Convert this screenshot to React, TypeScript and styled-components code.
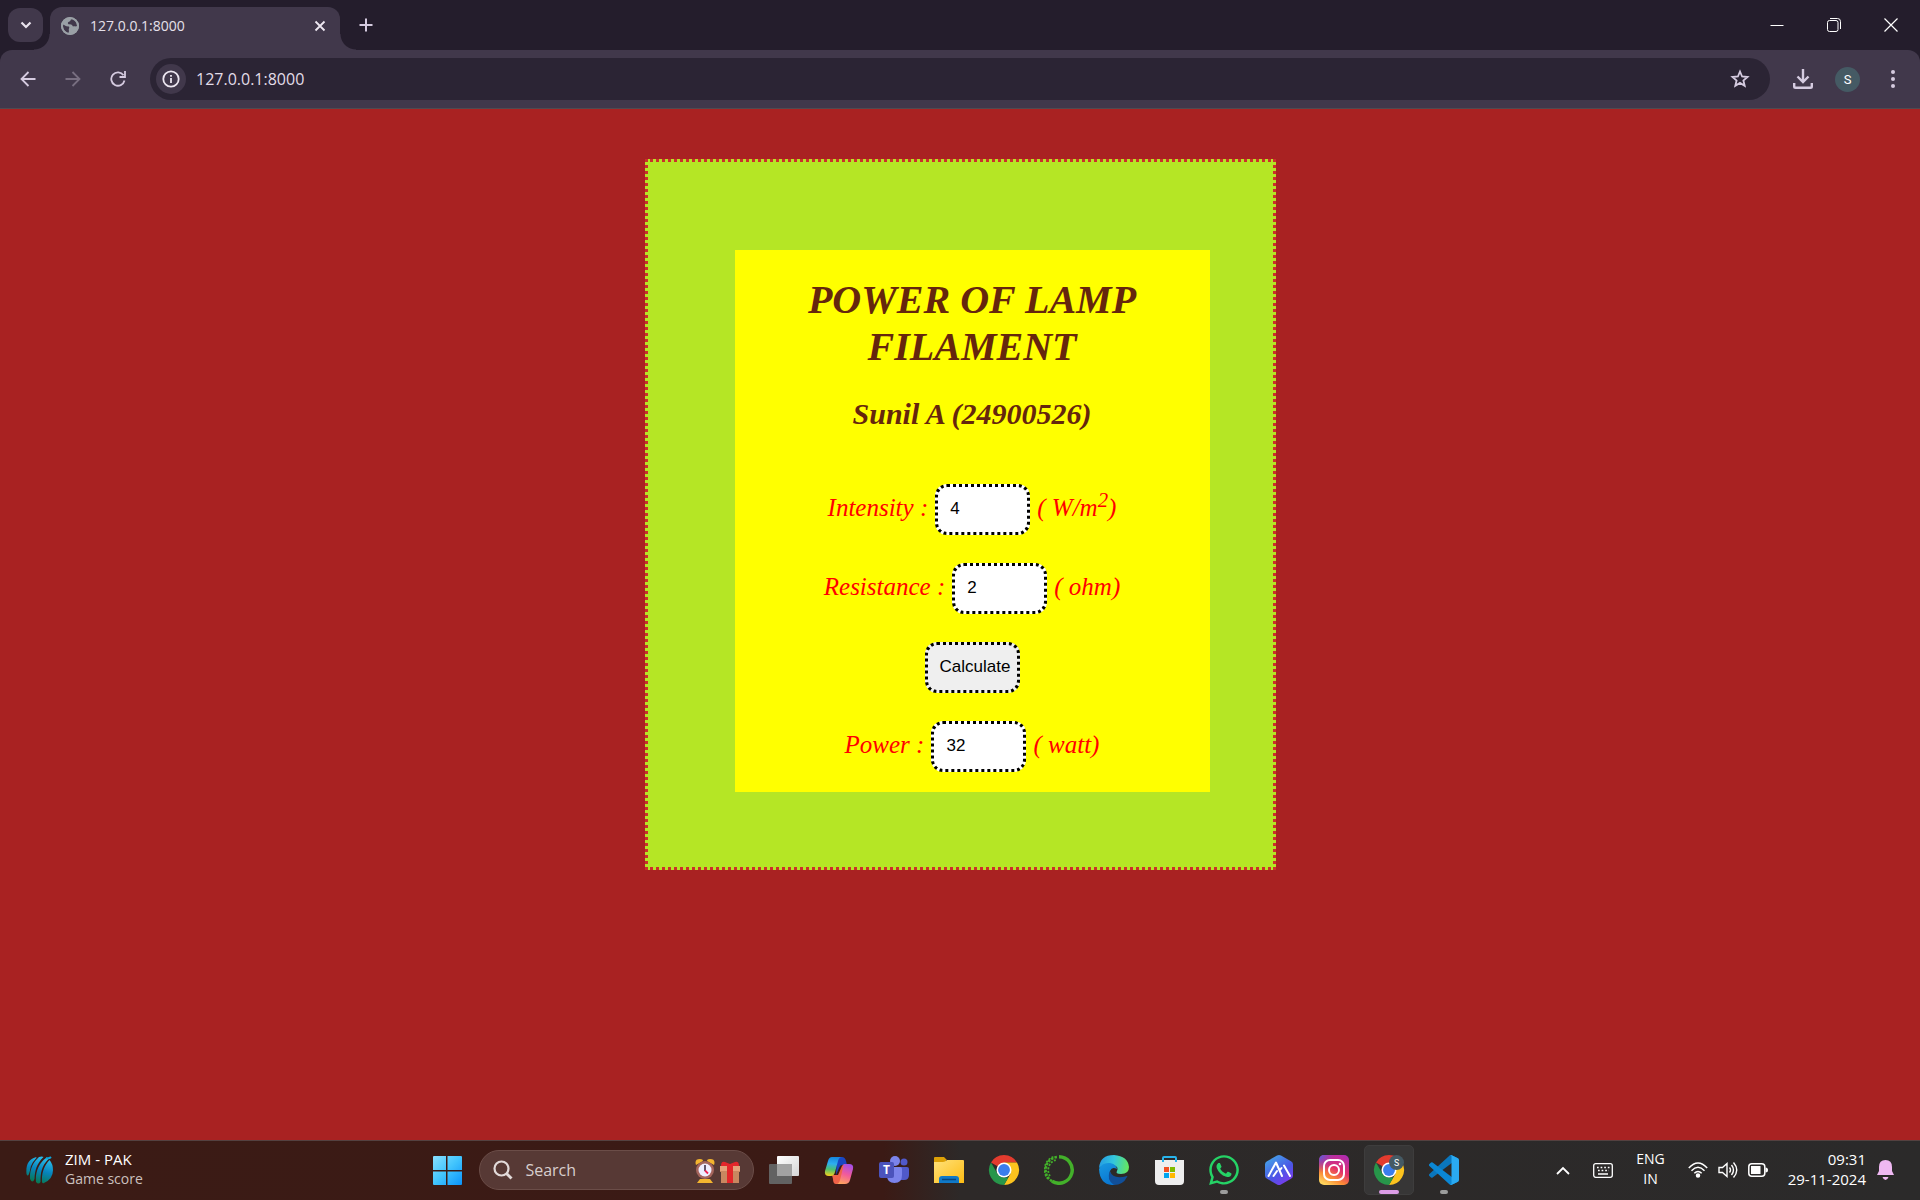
import React, { useState } from "react";
import styled, { createGlobalStyle } from "styled-components";
import { FaWhatsapp } from "react-icons/fa";

const ui = `"Open Sans", "Noto Sans", "Liberation Sans", sans-serif`;
const strip = "#241d2c";
const bar = "#41384b";

const GlobalStyle = createGlobalStyle`
  *, *::before, *::after { box-sizing: border-box; }
  body { margin: 0; font-family: ${ui}; }
  button, input { font: inherit; color: inherit; }
  svg { display: block; flex: none; }
`;

const Screen = styled.div`
  min-height: 100vh;
  display: flex;
  flex-direction: column;
  background: #a92222;
`;

/* ---------- browser frame ---------- */

const TabStrip = styled.div`
  height: 50px;
  display: flex;
  align-items: flex-end;
  background: ${strip};
  color: #e6e0ea;
`;

const IconButton = styled.button<{ $w?: number; $h?: number; $dim?: boolean }>`
  width: ${(p) => p.$w ?? 45}px;
  height: ${(p) => p.$h ?? 42}px;
  flex: none;
  padding: 0;
  border: 0;
  background: none;
  display: flex;
  align-items: center;
  justify-content: center;
  color: ${(p) => (p.$dim ? "#786f81" : "#d5cbe0")};
`;

const TabSearch = styled(IconButton)`
  margin: 0 7px 8px 8px;
  background: ${bar};
  border-radius: 12px;
  color: #e9e3ee;
`;

const Tab = styled.div`
  position: relative;
  width: 290px;
  height: 43px;
  display: flex;
  align-items: center;
  padding: 0 8px 6px 11px;
  background: ${bar};
  border-radius: 12px 12px 0 0;
  font-size: 14px;

  &::before,
  &::after {
    content: "";
    position: absolute;
    bottom: 0;
    width: 16px;
    height: 16px;
  }
  &::before {
    right: 100%;
    background: radial-gradient(circle at 0 0, transparent 15px, ${bar} 16px);
  }
  &::after {
    left: 100%;
    background: radial-gradient(circle at 100% 0, transparent 15px, ${bar} 16px);
  }
`;

const TabTitle = styled.span`
  flex: 1;
  margin-left: 11px;
`;

const WindowControls = styled.div`
  display: flex;
  margin-left: auto;
  padding-right: 1px;
  align-self: stretch;
  button { color: #ffffff; height: 49px; }
`;

const NewTab = styled(IconButton)`
  margin: 0 0 4px 3px;
`;

const ToolbarBack = styled.div`
  background: ${strip};
`;

const Toolbar = styled.div`
  height: 59px;
  display: flex;
  align-items: center;
  padding: 0 5px;
  background: ${bar};
  border-radius: 12px 12px 0 0;
  border-bottom: 1px solid #514a50;
`;

const Omnibox = styled.div`
  flex: 1;
  height: 42px;
  display: flex;
  align-items: center;
  margin: 0 10px;
  padding: 0 8px 0 6px;
  border-radius: 21px;
  background: #2b2434;
`;

const SiteInfo = styled(IconButton)`
  border-radius: 50%;
  background: ${bar};
  color: #ece6f0;
`;

const Address = styled.input`
  flex: 1;
  min-width: 0;
  margin-left: 10px;
  padding: 0;
  border: 0;
  outline: 0;
  background: none;
  color: #e2dce8;
  font-size: 16px;
`;

const Avatar = styled.span`
  width: 25px;
  height: 25px;
  border-radius: 50%;
  background: #455a64;
  color: #ffffff;
  font: 400 13px/25px Roboto, sans-serif;
  text-align: center;
`;

/* ---------- web page ---------- */

const Page = styled.main`
  flex: 1;
  padding: 50px 16px;
`;

const Edge = styled.div`
  max-width: 631px;
  margin: 0 auto;
  padding: 88px 63px 75px 87px;
  border: 3px dotted #cc2f2b;
  background: #b5e625;
`;

const Box = styled.form`
  padding: 26px 20px 20px;
  background: #ffff00;
  text-align: center;
  font-family: "Liberation Serif", "Times New Roman", serif;
  font-style: italic;
`;

const Title = styled.h1`
  margin: 0 0 26px;
  color: #65260d;
  font-size: 40px;
  line-height: 47px;
`;

const Author = styled.h2`
  margin: 0 0 53px;
  color: #65260d;
  font-size: 30px;
  line-height: 35px;
`;

const Fields = styled.div`
  display: grid;
  gap: 28px;
`;

const Row = styled.div`
  display: flex;
  justify-content: center;
  align-items: center;
  gap: 7px;
  color: #ff0000;
  font-size: 25px;
  line-height: 29px;

  label,
  span { padding-bottom: 4px; }
  sup { line-height: 0; }
`;

const control = `
  width: 95px;
  height: 51px;
  padding: 0 6px 2px 12px;
  border: 3px dotted #000000;
  border-radius: 12px;
  color: #000000;
  font: 17px "Liberation Sans", Arial, sans-serif;
`;

const Field = styled.input`
  ${control}
  background: #ffffff;
`;

const Calculate = styled.button`
  ${control}
  background: #efefef;
`;

/* ---------- taskbar ---------- */

const Taskbar = styled.footer`
  height: 60px;
  display: grid;
  grid-template-columns: 22% auto 1fr;
  align-items: center;
  padding-bottom: 1px;
  border-top: 1px solid #544140;
  background: linear-gradient(90deg, #3b1b15 0%, #3b1a15 46%, #2d2928 50%, #2b2a2a 100%);
  color: #ffffff;
`;

const Widget = styled.button`
  display: flex;
  align-items: center;
  gap: 12px;
  padding: 0 0 0 26px;
  border: 0;
  background: none;
  text-align: left;
`;

const Lines = styled.span<{ $size: number; $align?: string }>`
  display: grid;
  padding-bottom: 2px;
  font-size: ${(p) => p.$size}px;
  line-height: 20px;
  text-align: ${(p) => p.$align ?? "left"};
  white-space: nowrap;
`;

const Muted = styled.span`
  color: #cbc0bf;
  font-size: 14px;
`;

const Apps = styled.nav`
  display: flex;
  align-items: center;
  gap: 5px;
`;

const AppButton = styled.button<{ $active?: boolean; $dot?: boolean }>`
  position: relative;
  width: 50px;
  height: 50px;
  padding: 0;
  display: flex;
  align-items: center;
  justify-content: center;
  border: 1px solid ${(p) => (p.$active ? "#3e3d3d" : "transparent")};
  border-radius: 5px;
  background: ${(p) => (p.$active ? "#373636" : "none")};

  &::after {
    content: "";
    display: ${(p) => (p.$active || p.$dot ? "block" : "none")};
    position: absolute;
    bottom: 0;
    width: ${(p) => (p.$active ? 20 : 8)}px;
    height: 4px;
    border-radius: 2px;
    background: ${(p) => (p.$active ? "#dc9de6" : "#9c9c9c")};
  }
`;

const SearchBox = styled.label`
  width: 275px;
  height: 40px;
  margin-left: 2px;
  padding: 0 13px;
  display: flex;
  align-items: center;
  gap: 12px;
  border: 1px solid #6b4d48;
  border-radius: 20px;
  background: #573935;
`;

const SearchInput = styled.input`
  flex: 1;
  min-width: 0;
  padding: 0;
  border: 0;
  outline: 0;
  background: none;
  font-size: 16px;
  &::placeholder { color: #d8cecd; opacity: 1; }
`;

const Doodle = styled.span`
  display: flex;
  gap: 5px;
`;

const Tray = styled.div`
  display: flex;
  align-items: center;
  justify-content: flex-end;
  padding-right: 26px;
`;

const TrayButton = styled.button<{ $gap?: number }>`
  display: flex;
  align-items: center;
  gap: 10px;
  margin: 0 0 0 ${(p) => p.$gap ?? 0}px;
  padding: 0;
  border: 0;
  background: none;
`;

/* ---------- drawings ---------- */

const line = { fill: "none", stroke: "currentColor" } as const;

const Globe = () => (
  <svg width="18" height="18" viewBox="0 0 18 18">
    <circle cx="9" cy="9" r="9" fill="#9aa0a6" />
    <path d="M2 7.500C4 8 5 10 8 9.500C9 11 7 12 8 14L7.500 16C4 15.500 1.500 12 2 7.500Z M11 2C9 2.500 10 4 8.500 4.500C7 5 6 6 8 7.500C10 7 11 8 12 9.500C14 9 15 10 16 9C16.500 5.500 14 3 11 2Z" fill={bar} />
    <circle cx="9" cy="9" r="8" fill="none" stroke="#9aa0a6" strokeWidth="2" />
  </svg>
);

const WindowsLogo = () => (
  <svg width="30" height="30" viewBox="0 0 30 30">
    <defs>
      <linearGradient id="win" x1="0" y1="0" x2="30" y2="30" gradientUnits="userSpaceOnUse">
        <stop stopColor="#8fe2ff" /><stop offset=".5" stopColor="#43c5fd" /><stop offset="1" stopColor="#0a93fa" />
      </linearGradient>
    </defs>
    <path fill="url(#win)" d="M1 2q0-1 1-1h12v14H1zM15.500 1H29q1 0 1 1v13H15.500zM1 16.500h13V30H2q-1 0-1-1zM15.500 16.500H30V29q0 1-1 1H15.500z" />
  </svg>
);

const Cricket = () => (
  <svg width="27" height="29" viewBox="0 0 27 29">
    <defs>
      <linearGradient id="icc" x1="18" y1="0" x2="9" y2="28" gradientUnits="userSpaceOnUse">
        <stop stopColor="#2fc4f0" /><stop offset=".5" stopColor="#0784bd" /><stop offset="1" stopColor="#087642" />
      </linearGradient>
    </defs>
    <path fill="url(#icc)" d="M.5 18C-.5 9 3 3 9 1.500C13 .5 8 4 6 8C4 11 4.500 14 3 18Q1.500 21 .5 18zM4 23C3.500 14 7 6 13 1Q16 0 17.500 1C10.500 8 9 14 8.500 23Q6.500 28 4 23zM10 26C9 16 13 7 20 2L22.500 3C15.500 10 14.500 17 14.500 26Q12.500 29 10 26zM16 26C15.500 17 18 10 23.500 4Q27 8 27 14Q27 23 18 27Q16.500 28 16 26z" />
    <path fill="none" stroke="#0aa7dc" strokeWidth="2" d="M20 2Q23 3 25 1" />
  </svg>
);

const AlarmClock = () => (
  <svg width="20" height="25" viewBox="0 0 20 25">
    <path fill="#f4b52f" d="M1 7Q-1 1 5 1Q8 1 8 3zM19 7Q21 1 15 1Q12 1 12 3zM5 21h10l3 4H2z" />
    <circle cx="10" cy="12" r="9" fill="#a5655d" />
    <circle cx="10" cy="12" r="6.500" fill="#efedff" />
    <path fill="none" stroke="#35253d" strokeWidth="1.500" d="M10 7v6" />
    <path fill="none" stroke="#ef2353" strokeWidth="1.800" d="M10 12.500l3 3" />
  </svg>
);

const Gift = () => (
  <svg width="20" height="25" viewBox="0 0 20 25">
    <path fill="#c98760" d="M0 8h20v6h-1v11H1V14H0z" />
    <path fill="#e5a27a" d="M0 8h20v5H0z" />
    <path fill="#e3272b" d="M7 8h6v17H7zM1 8Q1 3 5 4L10 6L15 4Q19 3 19 8z" />
  </svg>
);

const TaskView = () => (
  <svg width="30" height="28" viewBox="0 0 30 28">
    <defs><linearGradient id="tv" x2="1" y2="1"><stop stopColor="#ffffff" /><stop offset="1" stopColor="#d5d5d5" /></linearGradient></defs>
    <rect y="8" width="23" height="20" rx="1" fill="#626262" />
    <rect x="8" width="22" height="20" rx="1" fill="url(#tv)" />
    <path d="M8 8h15v12H8z" fill="#a2a2a2" />
  </svg>
);

const Copilot = () => (
  <svg width="30" height="28" viewBox="0 0 30 28">
    <defs>
      <linearGradient id="cpA" x1="8" y1="1" x2="6" y2="20" gradientUnits="userSpaceOnUse"><stop stopColor="#1687df" /><stop offset=".35" stopColor="#2eaef0" /><stop offset=".65" stopColor="#4cc06f" /><stop offset="1" stopColor="#f4cf1c" /></linearGradient>
      <linearGradient id="cpB" x1="24" y1="8" x2="17" y2="28" gradientUnits="userSpaceOnUse"><stop stopColor="#a44ee7" /><stop offset=".5" stopColor="#f25b9a" /><stop offset="1" stopColor="#ffa65c" /></linearGradient>
    </defs>
    <path fill="#1946c2" d="M13 1h5q3 0 4 4l1 4h-5q-2 0-3 3l-3 7z" />
    <path fill="#ef6248" d="M8 19h6l4-9q1-2 3-2l-4 16q-1 4-4 4h-1q-3 0-3-5z" />
    <path fill="url(#cpA)" d="M8 1h10q-3 0-4 4l-3 11q-1 4-4 4H5q-5 0-4-5L4 5q1-4 4-4z" />
    <path fill="url(#cpB)" d="M20 8h5q5 0 4 5l-3 11q-1 4-5 4H12q3 0 4-4l3-12q0-3 1-4z" />
  </svg>
);

const Teams = () => (
  <svg width="30" height="28" viewBox="0 0 30 28">
    <circle cx="25" cy="6" r="3.500" fill="#5059c9" /><path fill="#5059c9" d="M21 11h7q2 0 2 2v6q0 5-5 5h-4z" />
    <circle cx="16" cy="5" r="5" fill="#7b83eb" /><path fill="#7b83eb" d="M9 11h12q2 0 2 2v6q0 8-7.500 8T8 19z" />
    <rect y="6" width="15" height="16" rx="2" fill="#4b53bc" />
    <text x="7.500" y="18" textAnchor="middle" fill="#ffffff" fontSize="12" fontWeight="700" fontFamily="Open Sans, sans-serif">T</text>
  </svg>
);

const Folder = () => (
  <svg width="30" height="28" viewBox="0 0 30 28">
    <defs><linearGradient id="fold" x2="1" y2="1"><stop stopColor="#ffe17a" /><stop offset="1" stopColor="#fdbc13" /></linearGradient></defs>
    <path fill="#dda006" d="M0 2q0-1 1-1h9l3 3h-1v6H0z" />
    <path fill="url(#fold)" d="M0 6h9q2 0 4-2h16q1 0 1 1v22H0z" />
    <path fill="#1079c8" d="M5 27v-4q0-3 3-3h14q3 0 3 3v4z" />
    <path stroke="#07457f" strokeWidth="1.500" d="M8 23.500h14" />
  </svg>
);

const Chrome = ({ badge }: { badge?: boolean }) => (
  <svg width="30" height="30" viewBox="0 0 48 48" overflow="visible">
    <path fill="#e33b2e" d="M24 24L3.200 12A24 24 0 0 1 44.800 12H24z" />
    <path fill="#fcc31e" d="M24 12h20.800A24 24 0 0 1 24 48l10.400-18z" />
    <path fill="#27964a" d="M24 48A24 24 0 0 1 3.200 12L13.600 30q4 6 10.400 6h7z" />
    <circle cx="24" cy="24" r="12" fill="#ffffff" /><circle cx="24" cy="24" r="9.500" fill="#3b7ded" />
    {badge && (
      <>
        <circle cx="36" cy="12" r="12" fill="#455a64" />
        <text x="36" y="17" textAnchor="middle" fill="#ffffff" fontSize="14" fontFamily="Roboto, sans-serif">S</text>
      </>
    )}
  </svg>
);

const Anaconda = () => (
  <svg width="30" height="30" viewBox="0 0 30 30" fill="none" stroke="#43b02a">
    <path strokeWidth="3.500" d="M15 1.800A13.200 13.200 0 1 1 8 26.200" />
    <path strokeWidth="2.500" strokeDasharray="2.500 1.200" d="M8 26.200A13 13 0 0 1 14 2" />
    <path strokeWidth="1.800" strokeDasharray="2 1.500" d="M6 21A10.500 10.500 0 0 1 12 5M4 24A14 14 0 0 1 10 1.500" />
  </svg>
);

const EdgeLogo = () => (
  <svg width="30" height="30" viewBox="0 0 30 30">
    <defs>
      <linearGradient id="edA" x1="1" y1="8" x2="30" y2="13" gradientUnits="userSpaceOnUse"><stop stopColor="#269fe3" /><stop offset=".45" stopColor="#34c6dc" /><stop offset="1" stopColor="#67e957" /></linearGradient>
      <linearGradient id="edB" x1="4" y1="9" x2="14" y2="30" gradientUnits="userSpaceOnUse"><stop stopColor="#1795df" /><stop offset="1" stopColor="#0873cf" /></linearGradient>
    </defs>
    <path fill="url(#edA)" d="M0 13Q1 0 15 0q14 1 15 12q0 7-8 7q-6 0-4-3q2-4-3-6Q8 7 0 13z" />
    <path fill="url(#edB)" d="M0 14Q3 7 11 8q6 1 7 6q-5-3-7 2q-2 7 5 14Q1 31 0 14z" />
    <path fill="#114f99" d="M11 16q3 9 17 5q1 0 0 1q-4 8-13 8q-8-5-4-14z" />
  </svg>
);

const Store = () => (
  <svg width="29" height="29" viewBox="0 0 29 29">
    <path fill="#eeeeee" d="M0 4h29v21q0 4-4 4H4q-4 0-4-4z" />
    <path fill="none" stroke="#28b4ec" strokeWidth="2" d="M8 6V2q0-1 1-1h11q1 0 1 1v4" />
    <path fill="#f25022" d="M9 11h5v5H9z" /><path fill="#7fba00" d="M15 11h5v5h-5z" />
    <path fill="#00a4ef" d="M9 17h5v5H9z" /><path fill="#ffb900" d="M15 17h5v5h-5z" />
  </svg>
);

const Hexagon = () => (
  <svg width="28" height="30" viewBox="0 0 28 30">
    <defs><linearGradient id="hex" x1="4" y1="2" x2="22" y2="28" gradientUnits="userSpaceOnUse"><stop stopColor="#45a4e8" /><stop offset=".6" stopColor="#4b56e6" /><stop offset="1" stopColor="#7a3bed" /></linearGradient></defs>
    <path fill="url(#hex)" d="M12 .6q2-1 4 0l10 5.600q2 1 2 3v11.600q0 2-2 3L16 29.400q-2 1-4 0L2 23.800q-2-1-2-3V9.200q0-2 2-3z" />
    <path fill="none" stroke="#ffffff" strokeWidth="2" strokeLinecap="round" strokeLinejoin="round" d="M3.500 21L11 7.500L17 21M8.500 21l3.500-5M15 15l1.500-2M19 10.500L25 21" />
  </svg>
);

const Instagram = () => (
  <svg width="30" height="30" viewBox="0 0 30 30">
    <defs>
      <linearGradient id="igA" x1="24" y1="0" x2="8" y2="30" gradientUnits="userSpaceOnUse"><stop stopColor="#b02cb0" /><stop offset=".45" stopColor="#e2306c" /><stop offset=".75" stopColor="#fb8a35" /><stop offset="1" stopColor="#ffd35c" /></linearGradient>
      <radialGradient id="igB" cx="0" cy="0" r="18" gradientUnits="userSpaceOnUse"><stop stopColor="#4c63e5" /><stop offset="1" stopColor="#a02cb8" stopOpacity="0" /></radialGradient>
    </defs>
    <rect width="30" height="30" rx="5" fill="url(#igA)" /><rect width="30" height="30" rx="5" fill="url(#igB)" />
    <g fill="none" stroke="#ffffff" strokeWidth="2"><rect x="5" y="5" width="20" height="20" rx="6" /><circle cx="15" cy="15" r="5" /></g>
    <circle cx="21" cy="9" r="1.300" fill="#ffffff" />
  </svg>
);

const VsCode = () => (
  <svg width="30" height="30" viewBox="0 0 100 100">
    <path fill="#0a76bd" d="M96.461 10.593L75.857.62a6.230 6.230 0 0 0-7.107 1.208L1.299 63.583a4.167 4.167 0 0 0 .004 6.162l5.510 5.009a4.167 4.167 0 0 0 5.320.236l81.228-61.620c2.725-2.067 6.639-.124 6.639 3.296v-.240a6.250 6.250 0 0 0-3.540-5.630z" />
    <path fill="#0b87d5" d="M96.461 89.407L75.857 99.380a6.230 6.230 0 0 1-7.107-1.208L1.299 36.417a4.167 4.167 0 0 1 .004-6.162l5.510-5.009a4.167 4.167 0 0 1 5.320-.236l81.228 61.620c2.725 2.067 6.639.124 6.639-3.296v.240a6.250 6.250 0 0 1-3.540 5.630z" />
    <path fill="#2aaaf2" d="M75.858 99.126a6.232 6.232 0 0 1-7.108-1.210c2.306 2.307 6.250.674 6.250-2.588V4.672c0-3.262-3.944-4.895-6.250-2.589a6.232 6.232 0 0 1 7.108-1.210l20.600 9.908A6.250 6.250 0 0 1 100 16.413v67.174a6.250 6.250 0 0 1-3.541 5.633l-20.601 9.906z" />
  </svg>
);

const apps: { name: string; icon: React.ReactNode; active?: boolean; dot?: boolean }[] = [
  { name: "Task view", icon: <TaskView /> },
  { name: "Copilot", icon: <Copilot /> },
  { name: "Teams", icon: <Teams /> },
  { name: "File Explorer", icon: <Folder /> },
  { name: "Chrome", icon: <Chrome /> },
  { name: "Anaconda", icon: <Anaconda /> },
  { name: "Edge", icon: <EdgeLogo /> },
  { name: "Store", icon: <Store /> },
  { name: "WhatsApp", icon: <FaWhatsapp size={34} color="#25d366" />, dot: true },
  { name: "Assistant", icon: <Hexagon /> },
  { name: "Instagram", icon: <Instagram /> },
  { name: "Chrome profile", icon: <Chrome badge />, active: true },
  { name: "Visual Studio Code", icon: <VsCode />, dot: true },
];

function BrowserFrame() {
  return (
    <header>
      <TabStrip>
        <TabSearch $w={35} $h={34} aria-label="Search tabs">
          <svg width="12" height="8" viewBox="0 0 12 8" {...line} strokeWidth="2.200"><path d="M1.500 1.500L6 6l4.500-4.500" /></svg>
        </TabSearch>
        <Tab>
          <Globe />
          <TabTitle>127.0.0.1:8000</TabTitle>
          <IconButton $w={24} $h={24} aria-label="Close tab">
            <svg width="12" height="12" viewBox="0 0 12 12" {...line} stroke="#eee8f2" strokeWidth="1.800"><path d="M1.500 1.500l9 9M10.500 1.500l-9 9" /></svg>
          </IconButton>
        </Tab>
        <NewTab aria-label="New tab">
          <svg width="14" height="14" viewBox="0 0 14 14" {...line} strokeWidth="2"><path d="M7 0.500v13M0.500 7h13" /></svg>
        </NewTab>
        <WindowControls>
          <IconButton $w={57} aria-label="Minimize">
            <svg width="14" height="14" viewBox="0 0 14 14" {...line}><path d="M0.500 7.500h13" /></svg>
          </IconButton>
          <IconButton $w={57} aria-label="Restore">
            <svg width="14" height="14" viewBox="0 0 14 14" {...line}><rect x=".5" y="2.500" width="10.500" height="11" rx="2" /><path d="M3 .5h7.500q3 0 3 3V11" /></svg>
          </IconButton>
          <IconButton $w={57} aria-label="Close">
            <svg width="14" height="14" viewBox="0 0 14 14" {...line} strokeWidth="1.200"><path d="M.5.5l13 13M13.500.5l-13 13" /></svg>
          </IconButton>
        </WindowControls>
      </TabStrip>
      <ToolbarBack>
        <Toolbar>
          <IconButton aria-label="Back">
            <svg width="16" height="16" viewBox="0 0 16 16" {...line} strokeWidth="1.800"><path d="M15.500 8H2M8.500 1L1.500 8l7 7" /></svg>
          </IconButton>
          <IconButton $dim aria-label="Forward">
            <svg width="16" height="16" viewBox="0 0 16 16" {...line} strokeWidth="1.800"><path d="M.5 8H14M7.500 1l7 7l-7 7" /></svg>
          </IconButton>
          <IconButton aria-label="Reload">
            <svg width="16" height="16" viewBox="0 0 16 16" {...line} strokeWidth="1.800"><path d="M14.500 9.500A6.700 6.700 0 1 1 13.500 4.200M15 0v6H9.500" /></svg>
          </IconButton>
          <Omnibox>
            <SiteInfo $w={30} $h={30} aria-label="Site information">
              <svg width="18" height="18" viewBox="0 0 18 18" {...line} strokeWidth="1.800"><circle cx="9" cy="9" r="7.700" /><path d="M9 8v5M9 5v1.800" /></svg>
            </SiteInfo>
            <Address aria-label="Address" defaultValue="127.0.0.1:8000" />
            <IconButton aria-label="Bookmark">
              <svg width="20" height="20" viewBox="0 0 20 20" {...line} strokeWidth="1.800"><path d="M10 2.500l2.100 5l5.400.5l-4.100 3.500l1.300 5.300L10 13.900l-4.700 2.900l1.300-5.300L2.500 8l5.400-.5z" /></svg>
            </IconButton>
          </Omnibox>
          <IconButton aria-label="Downloads">
            <svg width="20" height="20" viewBox="0 0 20 20" {...line} strokeWidth="2.400"><path d="M10 0v12M4.500 7.500L10 13l5.500-5.500M1.200 14v3.500q0 1.300 1.300 1.300h15q1.300 0 1.300-1.300V14" /></svg>
          </IconButton>
          <IconButton aria-label="Profile"><Avatar>S</Avatar></IconButton>
          <IconButton aria-label="Menu">
            <svg width="4" height="18" viewBox="0 0 4 18" fill="currentColor"><circle cx="2" cy="2" r="2" /><circle cx="2" cy="9" r="2" /><circle cx="2" cy="16" r="2" /></svg>
          </IconButton>
        </Toolbar>
      </ToolbarBack>
    </header>
  );
}

function PowerForm() {
  const [intensity, setIntensity] = useState("4");
  const [resistance, setResistance] = useState("2");
  const [power, setPower] = useState("32");

  const calculate = (e: React.FormEvent) => {
    e.preventDefault();
    setPower(String(Number(intensity) ** 2 * Number(resistance)));
  };

  return (
    <Box onSubmit={calculate}>
      <Title>POWER OF LAMP FILAMENT</Title>
      <Author>Sunil A (24900526)</Author>
      <Fields>
        <Row>
          <label htmlFor="intensity">Intensity :</label>
          <Field id="intensity" value={intensity} onChange={(e) => setIntensity(e.target.value)} />
          <span>( W/m<sup>2</sup>)</span>
        </Row>
        <Row>
          <label htmlFor="resistance">Resistance :</label>
          <Field id="resistance" value={resistance} onChange={(e) => setResistance(e.target.value)} />
          <span>( ohm)</span>
        </Row>
        <Row><Calculate type="submit">Calculate</Calculate></Row>
        <Row>
          <label htmlFor="power">Power :</label>
          <Field id="power" value={power} readOnly />
          <span>( watt)</span>
        </Row>
      </Fields>
    </Box>
  );
}

function DesktopTaskbar() {
  return (
    <Taskbar>
      <Widget>
        <Cricket />
        <Lines $size={15}><span>ZIM - PAK</span><Muted>Game score</Muted></Lines>
      </Widget>
      <Apps>
        <AppButton aria-label="Start"><WindowsLogo /></AppButton>
        <SearchBox>
          <svg width="20" height="20" viewBox="0 0 20 20" {...line} stroke="#e2dad9" strokeWidth="2.200"><circle cx="8.500" cy="8.500" r="7" /><path strokeWidth="3" d="M13.500 13.500l5 5" /></svg>
          <SearchInput aria-label="Search" placeholder="Search" />
          <Doodle><AlarmClock /><Gift /></Doodle>
        </SearchBox>
        {apps.map((a) => (
          <AppButton key={a.name} aria-label={a.name} $active={a.active} $dot={a.dot}>{a.icon}</AppButton>
        ))}
      </Apps>
      <Tray>
        <TrayButton aria-label="Hidden icons">
          <svg width="14" height="9" viewBox="0 0 14 9" {...line} strokeWidth="1.800"><path d="M1 8l6-6l6 6" /></svg>
        </TrayButton>
        <TrayButton $gap={23} aria-label="Touch keyboard">
          <svg width="20" height="15" viewBox="0 0 20 15" {...line} strokeWidth="1.300"><rect x=".7" y=".7" width="18.600" height="13.600" rx="2" /><path strokeWidth="1.700" strokeDasharray="1.700 1.900" d="M4 4.500h13M5 7.500h11" /><path strokeWidth="1.500" d="M5 11h10" /></svg>
        </TrayButton>
        <TrayButton $gap={23} aria-label="Language">
          <Lines $size={14} $align="center"><span>ENG</span><span>IN</span></Lines>
        </TrayButton>
        <TrayButton $gap={23} aria-label="Network, sound and battery">
          <svg width="20" height="16" viewBox="0 0 20 16" {...line} strokeWidth="1.500"><path d="M.8 6Q10-4 19.200 6M3.500 8.700q6.500-6.700 13 0M6.300 11.300q3.700-3.700 7.400 0" /><circle cx="10" cy="13.500" r="1.500" fill="currentColor" /></svg>
          <svg width="20" height="18" viewBox="0 0 20 18" {...line} strokeWidth="1.400"><path d="M1 6.500v5h3.500L9 15.500v-13L4.500 6.500zM11.500 6.500q2 2.500 0 5M13.500 4q4 5 0 10M15.500 1.500q6.500 7.500 0 15" /></svg>
          <svg width="20" height="14" viewBox="0 0 20 14" {...line} strokeWidth="1.500"><rect x=".8" y=".8" width="16" height="12.400" rx="3" /><path fill="currentColor" stroke="none" d="M3 3h9.500v8H3zM17.500 4.500q2.500 0 2.500 2.500t-2.500 2.500z" /></svg>
        </TrayButton>
        <TrayButton $gap={20} aria-label="Clock">
          <Lines $size={15} $align="right"><span>09:31</span><span>29-11-2024</span></Lines>
        </TrayButton>
        <TrayButton $gap={11} aria-label="Notifications">
          <svg width="17" height="20" viewBox="0 0 17 20" fill="#efb8f2"><path d="M8.500 0Q15 0 15 7v4l2 4H0l2-4V7Q2 0 8.500 0zM5.500 17h6q-1 3-3 3t-3-3z" /></svg>
        </TrayButton>
      </Tray>
    </Taskbar>
  );
}

export default function App() {
  return (
    <Screen>
      <GlobalStyle />
      <BrowserFrame />
      <Page>
        <Edge><PowerForm /></Edge>
      </Page>
      <DesktopTaskbar />
    </Screen>
  );
}
